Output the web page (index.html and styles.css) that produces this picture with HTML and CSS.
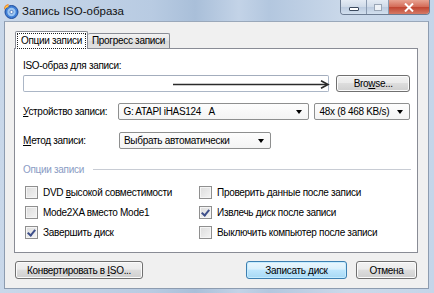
FILE: index.html
```html
<!DOCTYPE html>
<html lang="ru">

<head>
    <meta charset="UTF-8">
    <title>Запись ISO-образа</title>
    <link rel="stylesheet" href="styles.css">
</head>

<body>
    <div class="window">
        <!-- Title bar -->
        <div class="titlebar">
            <svg class="app-icon" width="16" height="16" viewBox="0 0 16 16">
                <circle cx="8.5" cy="9" r="6.5" fill="#3f7fd6" stroke="#1d4c9c" stroke-width="1"/>
                <circle cx="8.5" cy="9" r="4.2" fill="#9cc6f2"/>
                <circle cx="8.5" cy="9" r="1.6" fill="#ffffff" stroke="#1d4c9c" stroke-width="0.6"/>
                <path d="M1 5 C2 2 4 1 6 1 C5 2 5 3 6 4 C4 4 2 5 1 7 Z" fill="#f0862a"/>
                <path d="M2 5 C3 3 4 2.5 5 2.2 C4.6 3 4.8 3.6 5.2 4 C4 4.2 3 4.6 2 5.6 Z" fill="#ffd34a"/>
            </svg>
            <span class="title">Запись ISO-образа</span>
            <div class="controls">
                <span class="ctl ctl-min"><i></i></span>
                <span class="ctl ctl-max"><i></i></span>
                <span class="ctl ctl-close">
                    <svg width="12" height="9" viewBox="0 0 12 9">
                        <path d="M2 0.5 L10 8.5 M10 0.5 L2 8.5" stroke="#ffffff" stroke-width="2"/>
                    </svg>
                </span>
            </div>
        </div>

        <div class="client">
            <!-- Tabs -->
            <div class="tabs">
                <div class="tab active"><span class="focus">Опции записи</span></div>
                <div class="tab tab-progress">Прогресс записи</div>
            </div>

            <div class="sheet">
                <div class="label">ISO-образ для записи:</div>
                <div class="file-row">
                    <div class="textbox">
                        <svg class="arrow" width="157" height="9" viewBox="0 0 157 9">
                            <path d="M0 4.5 H154" stroke="#2b2b2b" stroke-width="1.6"/>
                            <path d="M148 0.8 L155 4.5 L148 8.2" fill="none" stroke="#2b2b2b" stroke-width="1.6"/>
                        </svg>
                    </div>
                    <button class="btn btn-browse">Bro<u>w</u>se...</button>
                </div>

                <div class="field-row">
                    <span class="field-label"><u>У</u>стройство записи:</span>
                    <div class="combo combo-device">G: ATAPI iHAS124&nbsp;&nbsp;&nbsp;A<span class="caret"></span></div>
                    <div class="combo combo-speed">48x (8 468 KB/s)<span class="caret"></span></div>
                </div>

                <div class="field-row method-row">
                    <span class="field-label"><u>М</u>етод записи:</span>
                    <div class="combo combo-method">Выбрать автоматически<span class="caret"></span></div>
                </div>

                <div class="group-head">
                    <span>Опции записи</span>
                    <div class="group-line"></div>
                </div>

                <div class="options">
                    <label class="check"><span class="box"></span><span>DVD <u>в</u>ысокой совместимости</span></label>
                    <label class="check"><span class="box"></span><span>Проверить данные после записи</span></label>
                    <label class="check"><span class="box"></span><span>Mode2XA вместо Mode1</span></label>
                    <label class="check"><span class="box checked"></span><span>Извлечь диск после записи</span></label>
                    <label class="check"><span class="box checked"></span><span>Завершить диск</span></label>
                    <label class="check"><span class="box"></span><span>Выключить компьютер после записи</span></label>
                </div>
            </div>

            <!-- Bottom buttons -->
            <div class="footer">
                <button class="btn btn-convert">Конвертировать в <u>I</u>SO...</button>
                <button class="btn btn-default btn-burn">Записать диск</button>
                <button class="btn btn-cancel">Отмена</button>
            </div>
        </div>
    </div>
</body>

</html>
```

FILE: styles.css
```css
/* General Styles */
body {
    margin: 0;
    padding: 0;
    font-family: "Liberation Sans", Arial, sans-serif;
    font-size: 10px;
    letter-spacing: -0.3px;
    color: #000;
    background-color: #c2d4e8;
    white-space: nowrap;
}

.window {
    width: 434px;
    height: 293px;
    overflow: hidden;
    background: linear-gradient(90deg, #c9d8ea 0%, #b8cbe2 35%, #a9bfd9 45%, #c3d3e7 55%, #b3c7df 62%, #cbd9ea 80%, #c4d5e9 100%);
}

/* Title bar */
.titlebar {
    height: 21px;
    display: flex;
    align-items: center;
    padding-left: 3px;
}

.app-icon {
    margin-right: 3px;
    margin-top: 1px;
}

.title {
    font-size: 11.5px;
    letter-spacing: 0;
    color: #111;
}

.controls {
    display: flex;
    margin-left: auto;
    margin-right: 4px;
    align-self: flex-start;
    height: 14px;
    border: 1px solid #6d7c92;
    border-top: none;
    border-radius: 0 0 4px 4px;
    overflow: hidden;
}

.ctl {
    display: flex;
    align-items: center;
    justify-content: center;
    height: 14px;
    background: linear-gradient(#e4ebf4, #cfdae8 50%, #bccbdf 51%, #d2dfee);
}

.ctl-min {
    width: 25px;
    border-right: 1px solid #8a9ab0;
}

.ctl-min i {
    display: block;
    width: 8px;
    height: 2px;
    margin-top: 3px;
    border: 1px solid #3c4a5e;
    background: #fff;
    border-radius: 1px;
}

.ctl-max {
    width: 21px;
    border-right: 1px solid #8a9ab0;
}

.ctl-max i {
    display: block;
    width: 6px;
    height: 5px;
    border: 1px solid #9aa6b6;
    background: #eef2f7;
}

.ctl-close {
    width: 40px;
    background: linear-gradient(#e8a493, #d36a56 50%, #c04430 51%, #d57a66);
}

/* Client area */
.client {
    margin-left: 4px;
    width: 425px;
    height: 268px;
    box-sizing: border-box;
    padding: 10px 10px 0 9px;
    background-color: #f0f0f0;
    border: 1px solid #8d9cb0;
    border-top-color: #9aa8ba;
}

.tabs {
    display: flex;
    align-items: flex-end;
    padding-left: 1px;
    height: 17px;
    position: relative;
    z-index: 1;
    margin-top: -1px;
}

.tab {
    height: 14px;
    line-height: 14px;
    text-align: center;
    border: 1px solid #898c95;
    border-bottom: none;
    background: linear-gradient(#f3f3f3, #e3e3e3 50%, #d9d9d9 51%, #e1e1e1);
    border-radius: 2px 2px 0 0;
}

.tab-progress {
    width: 81px;
    border-left: none;
}

.tab.active {
    width: 73px;
    height: 18px;
    line-height: 16px;
    margin-bottom: -1px;
    padding: 1px 1px 0 1px;
    box-sizing: border-box;
    background: #ffffff;
}

.focus {
    display: block;
    border: 1px dotted #222;
    line-height: 14px;
}

.sheet {
    height: 205px;
    box-sizing: border-box;
    border: 1px solid #898c95;
    background-color: #ffffff;
    padding: 10px 7px 0 8px;
}

.label {
    line-height: 13px;
}

.file-row {
    display: flex;
    align-items: center;
    margin-top: 3px;
}

.textbox {
    position: relative;
    width: 308px;
    height: 17px;
    box-sizing: border-box;
    border: 1px solid #abb6c6;
    border-top-color: #a3adbd;
    border-radius: 2px;
    background: #fff;
}

.arrow {
    position: absolute;
    left: 149px;
    top: 4px;
}

.btn {
    font-family: inherit;
    font-size: inherit;
    letter-spacing: inherit;
    color: #000;
    height: 18px;
    padding: 0;
    border: 1px solid #707070;
    border-radius: 3px;
    background: linear-gradient(#f2f2f2, #ebebeb 45%, #dddddd 50%, #cfcfcf);
    box-shadow: inset 0 0 0 1px #fbfbfb;
}

.btn-browse {
    width: 74px;
    height: 17px;
    margin-left: 7px;
}

.field-row {
    display: flex;
    align-items: center;
    margin-top: 11px;
}

.method-row {
    margin-top: 12px;
}

.field-label {
    width: 96px;
}

.combo {
    position: relative;
    height: 17px;
    line-height: 15px;
    box-sizing: border-box;
    padding-left: 4px;
    border: 1px solid #8e8f8f;
    border-radius: 2px;
    background: linear-gradient(#fdfdfd, #f4f4f4);
}

.combo-device {
    width: 192px;
}

.combo-speed {
    width: 96px;
    margin-left: 5px;
}

.combo-method {
    width: 152px;
}

.caret {
    position: absolute;
    right: 6px;
    top: 6px;
    border-left: 3.5px solid transparent;
    border-right: 3.5px solid transparent;
    border-top: 4px solid #000;
}

.group-head {
    display: flex;
    align-items: center;
    margin-top: 14px;
    line-height: 13px;
    color: #8a9cc4;
}

.group-line {
    flex: 1;
    height: 1px;
    margin-left: 9px;
    margin-right: -1px;
    background-color: #c8ccd4;
}

.options {
    display: grid;
    grid-template-columns: 174px 1fr;
    grid-auto-rows: 20px;
    padding-left: 2px;
    margin-top: 6px;
}

.check {
    display: flex;
    align-items: center;
}

.box {
    width: 11px;
    height: 11px;
    margin-right: 5px;
    border: 1px solid #8f8f8f;
    background: linear-gradient(135deg, #dcdcdc, #f4f4f4);
    box-shadow: inset 0 0 0 1px #f5f5f5;
    position: relative;
}

.box.checked::after {
    content: "";
    position: absolute;
    left: 3px;
    top: 1px;
    width: 3px;
    height: 6px;
    border-right: 2px solid #3e4f8a;
    border-bottom: 2px solid #3e4f8a;
    transform: rotate(40deg);
}

/* Footer buttons */
.footer {
    display: flex;
    margin-top: 8px;
    padding: 0 1px;
}

.btn-convert {
    width: 128px;
}

.btn-burn {
    width: 101px;
    margin-left: auto;
}

.btn-cancel {
    width: 61px;
    margin-left: 9px;
}

.btn-default {
    border-color: #3c7fb1;
    background: linear-gradient(#eaf6fd, #d9f0fc 45%, #bee6fd 50%, #a7d9f5);
    box-shadow: inset 0 0 0 1px #c5ecff;
}
```
